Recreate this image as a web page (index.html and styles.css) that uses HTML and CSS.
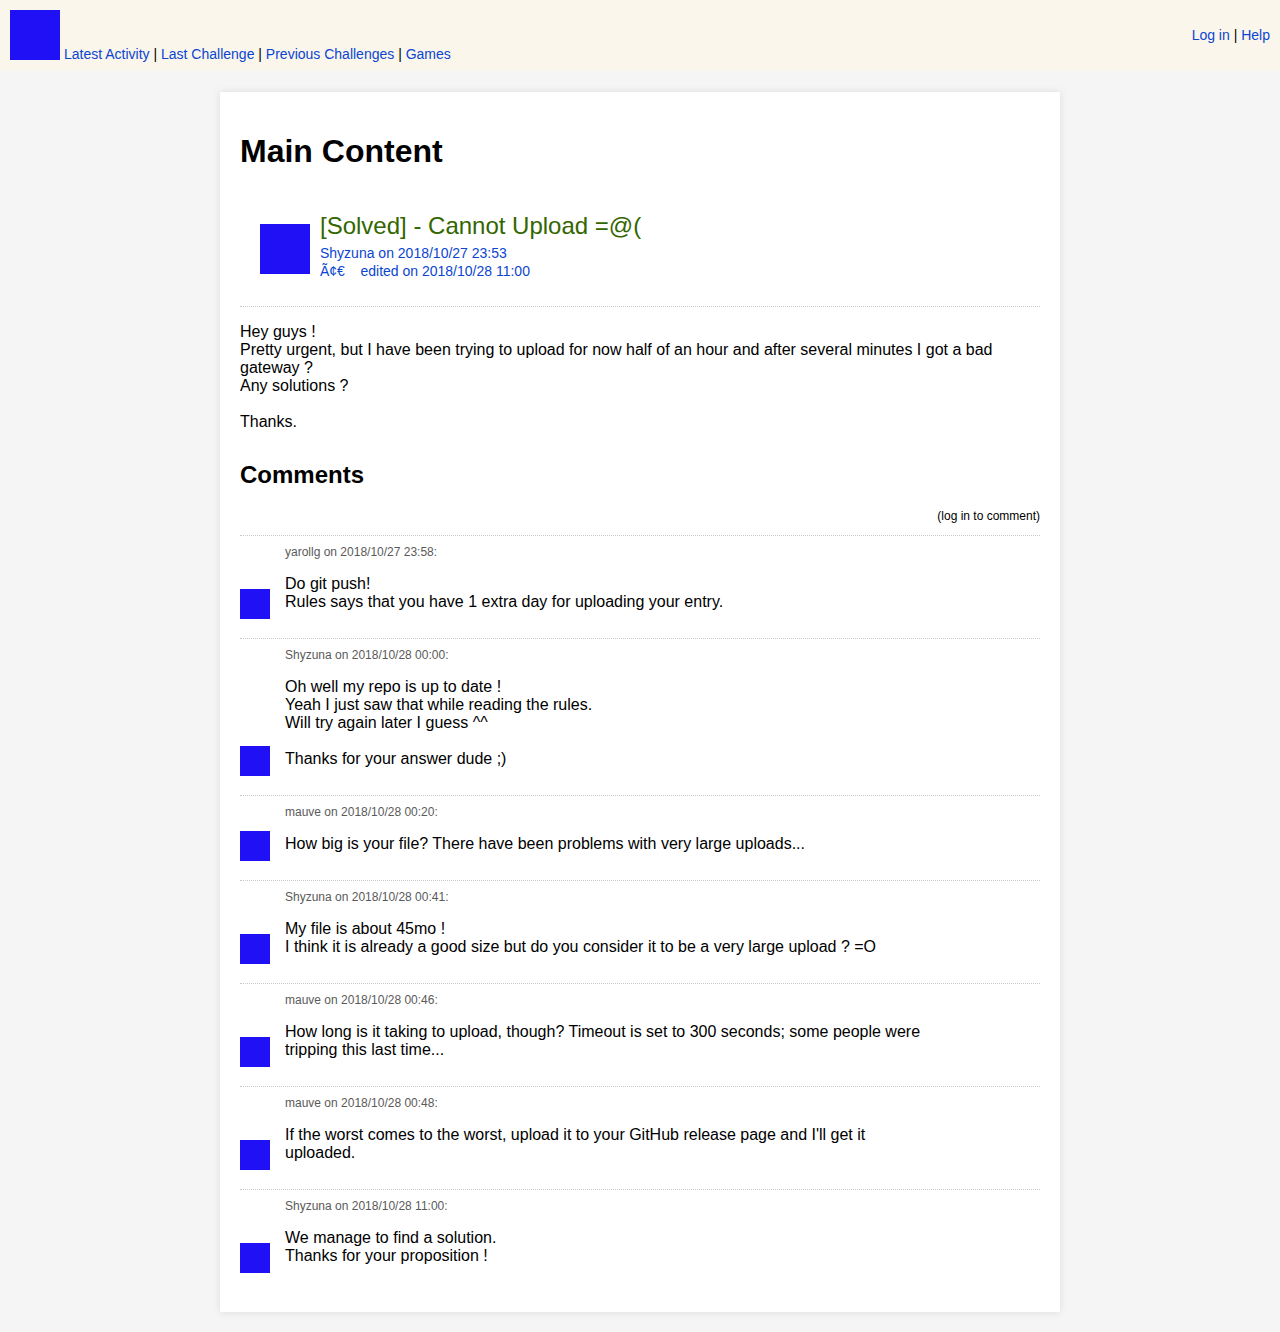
FILE: index.html
```html
<!DOCTYPE html>
<html>
<head>
<meta charset="utf-8">
<title>Cannot Upload</title>
<link rel="stylesheet" href="styles.css">
</head>
<body>
<header class="topbar">
  <nav class="nav">
    <span class="logo"></span><a href="#">Latest Activity</a> | <a href="#">Last Challenge</a> | <a href="#">Previous Challenges</a> | <a href="#">Games</a>
  </nav>
  <div class="account"><a href="#">Log in</a> | <a href="#">Help</a></div>
</header>

<main class="card">
  <h1 class="page-title">Main Content</h1>

  <div class="post-head">
    <span class="avatar-lg"></span>
    <div class="post-info">
      <div class="post-title">[Solved] - Cannot Upload =@(</div>
      <div class="post-meta">
        <a href="#">Shyzuna</a> on 2018/10/27 23:53<br>
        Ã¢€&nbsp;&nbsp;&nbsp; edited on 2018/10/28 11:00
      </div>
    </div>
  </div>

  <div class="post-body">
    Hey guys !<br>
    Pretty urgent, but I have been trying to upload for now half of an hour and after several minutes I got a bad gateway ?<br>
    Any solutions ?<br>
    <br>
    Thanks.
  </div>

  <h2 class="comments-title">Comments</h2>
  <div class="comment-login">(log in to comment)</div>

  <div class="comment">
    <div class="comment-meta">yarollg on 2018/10/27 23:58:</div>
    <div class="comment-row">
      <span class="avatar-sm"></span>
      <div class="comment-text">Do git push!<br>Rules says that you have 1 extra day for uploading your entry.</div>
    </div>
  </div>

  <div class="comment">
    <div class="comment-meta">Shyzuna on 2018/10/28 00:00:</div>
    <div class="comment-row">
      <span class="avatar-sm"></span>
      <div class="comment-text">Oh well my repo is up to date !<br>Yeah I just saw that while reading the rules.<br>Will try again later I guess ^^<br><br>Thanks for your answer dude ;)</div>
    </div>
  </div>

  <div class="comment">
    <div class="comment-meta">mauve on 2018/10/28 00:20:</div>
    <div class="comment-row">
      <span class="avatar-sm"></span>
      <div class="comment-text">How big is your file? There have been problems with very large uploads...</div>
    </div>
  </div>

  <div class="comment">
    <div class="comment-meta">Shyzuna on 2018/10/28 00:41:</div>
    <div class="comment-row">
      <span class="avatar-sm"></span>
      <div class="comment-text">My file is about 45mo !<br>I think it is already a good size but do you consider it to be a very large upload ? =O</div>
    </div>
  </div>

  <div class="comment">
    <div class="comment-meta">mauve on 2018/10/28 00:46:</div>
    <div class="comment-row">
      <span class="avatar-sm"></span>
      <div class="comment-text">How long is it taking to upload, though? Timeout is set to 300 seconds; some people were tripping this last time...</div>
    </div>
  </div>

  <div class="comment">
    <div class="comment-meta">mauve on 2018/10/28 00:48:</div>
    <div class="comment-row">
      <span class="avatar-sm"></span>
      <div class="comment-text">If the worst comes to the worst, upload it to your GitHub release page and I'll get it uploaded.</div>
    </div>
  </div>

  <div class="comment">
    <div class="comment-meta">Shyzuna on 2018/10/28 11:00:</div>
    <div class="comment-row">
      <span class="avatar-sm"></span>
      <div class="comment-text">We manage to find a solution.<br>Thanks for your proposition !</div>
    </div>
  </div>
</main>
</body>
</html>
```

FILE: styles.css
```css
html, body {
  margin: 0;
  padding: 0;
}
body {
  background: #f5f5f5;
  font-family: "Liberation Sans", Arial, Helvetica, sans-serif;
  color: #000;
  padding-bottom: 20px;
}
a {
  color: #0b45d0;
  text-decoration: none;
}

.topbar {
  background: #faf6ec;
  display: flex;
  justify-content: space-between;
  align-items: center;
  padding: 10px 10px 9px 10px;
  font-size: 14px;
}
.nav {
  line-height: 16px;
}
.logo {
  display: inline-block;
  width: 50px;
  height: 50px;
  background: #1f10f5;
  vertical-align: baseline;
  margin-right: 4px;
  margin-bottom: -1px;
}
.account {
  line-height: 16px;
  margin-top: -2px;
}

.card {
  width: 800px;
  margin: 21px auto 0;
  background: #fff;
  padding: 20px;
  box-shadow: 0 0 8px rgba(0, 0, 0, 0.1);
}

.page-title {
  font-size: 32px;
  font-weight: bold;
  margin: 21px 0 42px 0;
  line-height: 37px;
}

.post-head {
  display: flex;
  align-items: flex-end;
  padding: 0 20px 26px 20px;
  border-bottom: 1px dotted #c8c8c8;
}
.avatar-lg {
  flex: none;
  width: 50px;
  height: 50px;
  background: #1f10f5;
  margin-right: 10px;
  margin-bottom: 6px;
}
.post-title {
  font-size: 24px;
  line-height: 28px;
  color: #336600;
  margin-bottom: 4px;
}
.post-meta {
  font-size: 14px;
  line-height: 18px;
  color: #0b45d0;
}

.post-body {
  font-size: 16px;
  line-height: 18px;
  padding-top: 16px;
}

.comments-title {
  font-size: 24px;
  font-weight: bold;
  line-height: 28px;
  margin: 30px 0 21px 0;
}
.comment-login {
  font-size: 12px;
  line-height: 13px;
  text-align: right;
  padding-bottom: 12px;
}

.comment {
  border-top: 1px dotted #c8c8c8;
  padding: 10px 0 19px 0;
}
.comment-meta {
  font-size: 12px;
  line-height: 13px;
  color: #5a5a5a;
  padding-left: 45px;
  margin-bottom: 16px;
}
.comment-row {
  display: flex;
  align-items: flex-end;
}
.avatar-sm {
  flex: none;
  width: 30px;
  height: 30px;
  margin-top: -12px;
  background: #1f10f5;
  margin-right: 15px;
}
.comment-text {
  width: 640px;
  font-size: 16px;
  line-height: 18px;
  padding-bottom: 8px;
}
```
